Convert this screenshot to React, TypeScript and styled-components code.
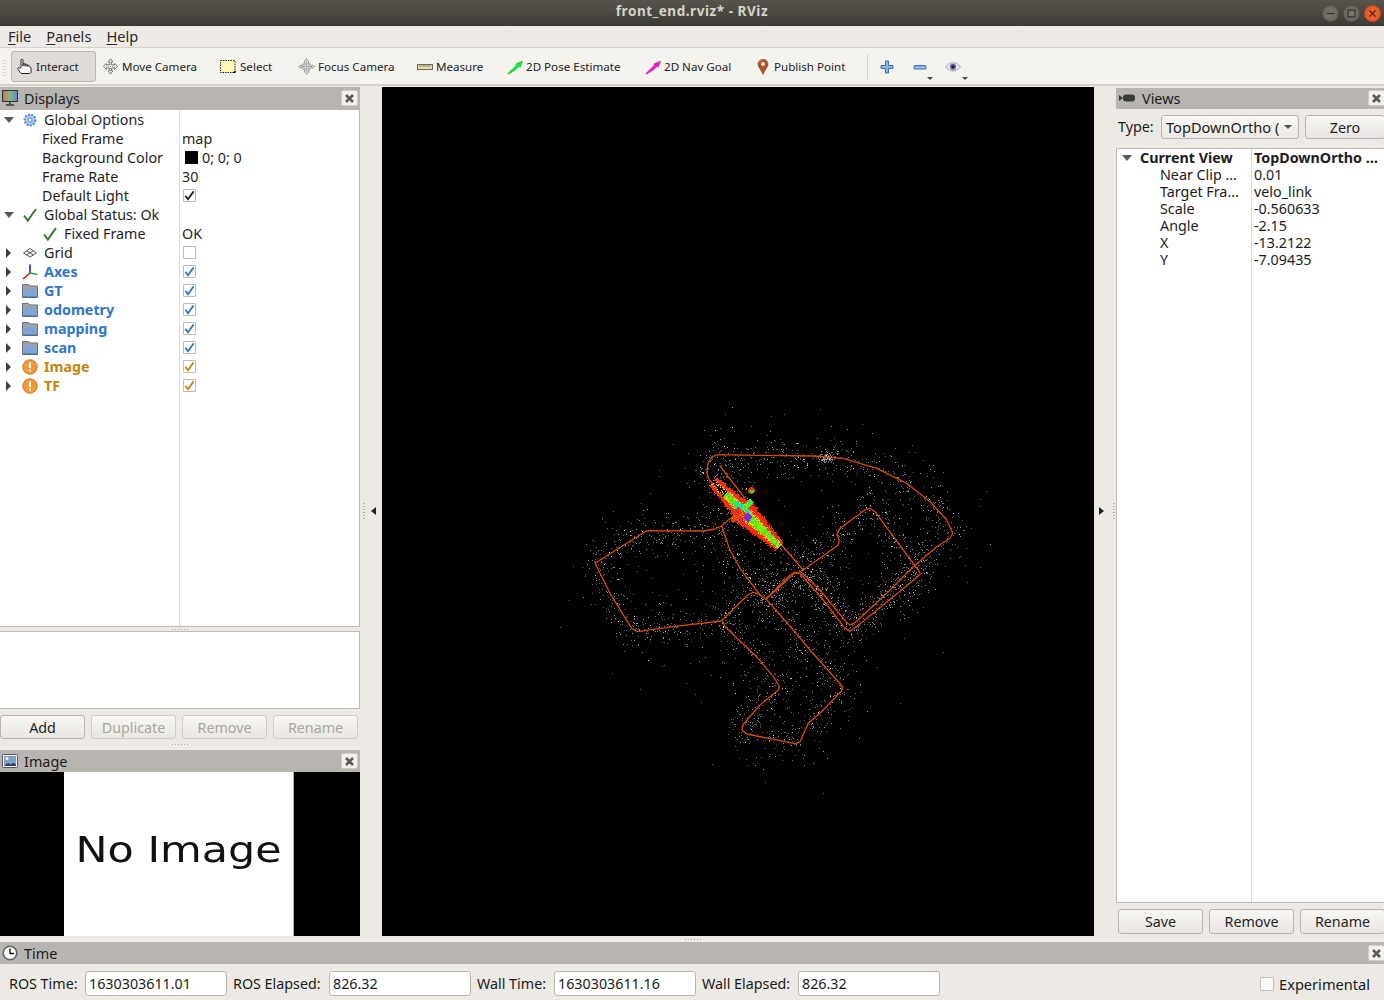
import React from "react";
import styled, { createGlobalStyle } from "styled-components";

const Global = createGlobalStyle`
  html, body { margin: 0; padding: 0; background: #edeae5; }
  body { font-family: "Noto Sans", "Open Sans", sans-serif; color: #1a1a1a; }
  * { box-sizing: border-box; }
`;

const Window = styled.div`
  width: 1384px; height: 1000px; overflow: hidden; display: flex; flex-direction: column; background: #edeae5;
`;
const TitleBar = styled.div`
  height: 26px; flex: none; display: grid; grid-template-columns: 1fr auto 1fr; align-items: center;
  background: linear-gradient(#57544c, #3d3b36); padding-bottom: 5px;
`;
const TitleText = styled.div`
  grid-column: 2; font-size: 13.5px; font-weight: 700; color: #d6d3c9; letter-spacing: 0.55px; white-space: nowrap;
`;
const WinButtons = styled.div`
  grid-column: 3; justify-self: end; display: flex; gap: 4px; padding-right: 3px; padding-top: 5px;
`;
const WinButton = styled.div<{ $close?: boolean }>`
  width: 17px; height: 17px; border-radius: 50%; display: flex; align-items: center; justify-content: center;
  background: ${(p) => (p.$close ? "radial-gradient(#f0693a, #e0501c)" : "radial-gradient(#77756e, #65635c)")};
  border: 1px solid ${(p) => (p.$close ? "#c84a1c" : "#55534c")};
`;
const MenuBar = styled.div`
  height: 22px; flex: none; display: flex; align-items: center; gap: 15px; padding: 0 0 1px 8px; font-size: 14.6px;
  background: #eeebe6; border-bottom: 1px solid #d6d2cc; color: #2a2a2a;
`;
const MenuItem = styled.span`
  u { text-underline-offset: 2px; }
`;
const ToolBar = styled.div`
  height: 38px; flex: none; display: flex; align-items: center; padding: 1px 0 0 11px; position: relative;
  background: #f5f3ee; border-bottom: 2px solid #d4d0ca; font-size: 11.6px; color: #222;
`;
const Grip = styled.div`
  position: absolute; left: 3px; top: 12px; width: 4px; height: 16px;
  background: repeating-linear-gradient(90deg, #c4c0ba 0 1px, transparent 1px 2px);
  -webkit-mask-image: repeating-linear-gradient(#000 0 1px, transparent 1px 3px);
`;
const ToolButton = styled.div<{ $w: number; $active?: boolean }>`
  width: ${(p) => p.$w}px; height: 31px; flex: none; display: flex; align-items: center; gap: 3px;
  padding-left: ${(p) => (p.$active ? 4 : 5)}px; white-space: nowrap; border-radius: 3px;
  background: ${(p) => (p.$active ? "#dfdcd8" : "transparent")};
  border: 1px solid ${(p) => (p.$active ? "#b9b5af" : "transparent")};
`;
const ToolSep = styled.div`
  width: 1px; height: 26px; background: #d6d2cc; margin: 0 12px 0 4px; flex: none;
`;
const IconButton = styled.div<{ $w: number }>`
  width: ${(p) => p.$w}px; height: 31px; flex: none; position: relative; display: flex; align-items: center;
`;
const MiniArrow = styled.span<{ $right?: number }>`
  position: absolute; right: ${(p) => p.$right ?? 1}px; bottom: 2px; width: 0; height: 0;
  border-left: 3px solid transparent; border-right: 3px solid transparent; border-top: 3px solid #444;
`;
const Body = styled.div`
  height: 850px; flex: none; display: flex; 
`;
const LeftColumn = styled.div`
  width: 360px; flex: none; display: flex; flex-direction: column; padding-top: 1px;
`;
const PanelHeader = styled.div<{ $h?: number; $shift?: number }>`
  height: ${(p) => p.$h ?? 22}px; flex: none; display: flex; align-items: center; background: #b8b4b0; font-size: 14.4px;
  padding: 0 0 ${(p) => p.$shift ?? 0}px 2px; gap: 6px; color: #1c1c1c; position: relative;
`;
const HeaderTitle = styled.span`
  flex: 1; white-space: nowrap;
`;
const CloseBox = styled.div<{ $edge?: boolean }>`
  width: 17px; height: 16px; flex: none; margin-right: ${(p) => (p.$edge ? -1 : 2)}px; border-radius: 2px; background: #f3f1ed; border: 1px solid #cfccc7;
  display: flex; align-items: center; justify-content: center;
`;
const DisplayTree = styled.div`
  height: 517px; flex: none; background: #fff; border-right: 1px solid #bdb9b4; border-bottom: 1px solid #bdb9b4;
  font-size: 14.3px; overflow: hidden; position: relative;
  background-image: linear-gradient(#dedbd7, #dedbd7); background-size: 1px 100%; background-position: 179px 0; background-repeat: no-repeat;
`;
const Row = styled.div`
  height: 19px; display: flex; align-items: center; white-space: nowrap;
`;
const NameCell = styled.div<{ $color?: string; $bold?: boolean }>`
  width: 182px; flex: none; display: flex; align-items: center; height: 100%;
  color: ${(p) => p.$color ?? "#1f1f1f"}; font-weight: ${(p) => (p.$bold ? 700 : 400)};
`;
const Expander = styled.div`
  width: 22px; flex: none; height: 100%; display: flex; align-items: center; padding-left: 4px;
`;
const ArrowDown = styled.span`
  width: 0; height: 0; border-left: 5px solid transparent; border-right: 5px solid transparent; border-top: 6px solid #5a5a5a;
`;
const ArrowRight = styled.span`
  width: 0; height: 0; margin-left: 2px; border-top: 5px solid transparent; border-bottom: 5px solid transparent; border-left: 5px solid #3e3e3e;
`;
const IconSlot = styled.div`
  width: 16px; height: 16px; flex: none; margin-right: 6px; display: flex; align-items: center; justify-content: center;
`;
const PropLabel = styled.span`
  padding-left: 42px;
`;
const ChildStatus = styled.div`
  display: flex; align-items: center; gap: 6px; padding-left: 42px;
`;
const ValueCell = styled.div`
  display: flex; align-items: center; gap: 4px; color: #1f1f1f;
`;
const Swatch = styled.span`
  width: 13px; height: 13px; background: #000; margin-left: 3px;
`;
const CheckBox = styled.div`
  width: 13px; height: 13px; margin-left: 1px; background: #fff; border: 1px solid #bdb9b4; border-radius: 1px; display: flex; align-items: center; justify-content: center;
`;
const Splitter = styled.div<{ $h: number }>`
  height: ${(p) => p.$h}px; flex: none; display: flex; align-items: center; justify-content: center;
`;
const HDots = styled.div`
  width: 16px; height: 1px; background: repeating-linear-gradient(90deg, #aaa6a0 0 1px, transparent 1px 3px);
`;
const DescBox = styled.div`
  height: 78px; flex: none; background: #fff; border: 1px solid #bdb9b4; border-left: none;
`;
const ButtonRow = styled.div<{ $pad?: string }>`
  display: flex; gap: 6px; flex: none; padding: ${(p) => p.$pad ?? "6px 2px 0 0"}; 
`;
const Btn = styled.div<{ $disabled?: boolean; $h?: number; $w?: number }>`
  width: ${(p) => p.$w ?? 85}px; height: ${(p) => p.$h ?? 25}px; flex: none; border: 1px solid #b9b5af; border-radius: 3px;
  background: linear-gradient(#f9f8f6, #e9e6e2); display: flex; align-items: center; justify-content: center; font-size: 14.3px;
  color: ${(p) => (p.$disabled ? "#a8a5a0" : "#1f1f1f")};
  border-color: ${(p) => (p.$disabled ? "#d0ccc7" : "#b9b5af")};
`;
const ZeroBtn = styled(Btn)`
  margin-left: 6px;
`;
const ImagePane = styled.div`
  height: 164px; flex: none; background: #000; display: flex; justify-content: center; padding-right: 1px;
`;
const NoImage = styled.div`
  width: 230px; margin-left: -1px; background: #fff; border-right: 1px solid #aaa; color: #111; display: flex; align-items: center; justify-content: center;
  font-family: "DejaVu Sans", sans-serif; font-size: 36px; white-space: nowrap; padding-bottom: 10px;
`;
const NoImageText = styled.span`
  display: inline-block; transform: scaleX(1.19); font-weight: 400;
`;
const SideSplit = styled.div<{ $gap: number; $pad: number }>`
  width: 22px; flex: none; display: flex; align-items: center; gap: ${(p) => p.$gap}px; padding-left: ${(p) => p.$pad}px;
`;
const VDots = styled.div`
  width: 2px; height: 16px; flex: none; background: repeating-linear-gradient(#b5b1ab 0 1px, transparent 1px 3px);
`;
const SideLeft = styled.span`
  width: 0; height: 0; flex: none; margin-left: -2px; border-top: 4px solid transparent; border-bottom: 4px solid transparent; border-right: 5px solid #222;
`;
const SideRight = styled.span`
  width: 0; height: 0; flex: none; border-top: 4px solid transparent; border-bottom: 4px solid transparent; border-left: 5px solid #222;
`;
const Viewport = styled.div`
  width: 712px; flex: none; margin-top: 1px; background: #000; overflow: hidden;
`;
const MapSvg = styled.svg`
  display: block; width: 712px; height: 849px;
`;
const RightColumn = styled.div`
  width: 268px; flex: none; display: flex; flex-direction: column; padding-top: 2px; overflow: hidden;
`;
const TypeRow = styled.div`
  height: 39px; flex: none; display: flex; align-items: flex-start; font-size: 14.3px; padding: 6px 0 0 2px;
`;
const TypeLabel = styled.span`
  width: 43px; height: 24px; line-height: 24px; flex: none;
`;
const Combo = styled.div`
  width: 138px; height: 24px; flex: none; border: 1px solid #b9b5af; border-radius: 3px; background: linear-gradient(#f9f8f6, #ebe8e4);
  display: flex; align-items: center; padding-left: 4px; overflow: hidden; white-space: nowrap; gap: 2px; font-size: 14.6px;
`;
const ComboText = styled.span`
  width: 113px; overflow: hidden; flex: none;
`;
const ComboArrow = styled.span`
  width: 0; height: 0; flex: none; margin-left: 3px; border-left: 4px solid transparent; border-right: 4px solid transparent; border-top: 4px solid #555;
`;
const ViewTree = styled.div`
  height: 755px; flex: none; background: #fff; border: 1px solid #bdb9b4; border-right: none; font-size: 14.3px;
  background-image: linear-gradient(#dedbd7, #dedbd7); background-size: 1px 100%; background-position: 134px 0; background-repeat: no-repeat;
`;
const ViewRow = styled.div<{ $bold?: boolean }>`
  height: 17px; display: flex; align-items: center; white-space: nowrap; font-weight: ${(p) => (p.$bold ? 700 : 400)}; color: #1c1c1c;
`;
const ViewName = styled.div<{ $top?: boolean }>`
  width: 137px; flex: none; display: flex; align-items: center; padding-left: ${(p) => (p.$top ? 5 : 43)}px; gap: 8px;
`;
const TimeSplit = styled.div`
  height: 6px; flex: none; display: flex; justify-content: center; align-items: center; padding-left: 2px;
`;
const TimeRow = styled.div`
  flex: 1; display: flex; align-items: center; padding: 3px 14px 0 9px; font-size: 14.3px; white-space: nowrap;
`;
const TimeLabel = styled.span<{ $w: number }>`
  width: ${(p) => p.$w}px; flex: none;
`;
const TimeField = styled.div`
  width: 142px; height: 25px; flex: none; margin-right: 6px; border: 1px solid #b9b5af; border-radius: 3px; background: #fff; display: flex; align-items: center; padding-left: 3px;
`;
const Experimental = styled.div`
  margin-left: auto; display: flex; align-items: center; gap: 5px; font-size: 14.6px;
`;
const ExpBox = styled.div`
  width: 14px; height: 14px; background: #fbfaf9; border: 1px solid #c2beb9; border-radius: 1px;
`;

/* ---------- icons ---------- */
const Ico: React.FC<React.PropsWithChildren<{ s?: number; vb?: string }>> = ({ s = 16, vb = "0 0 16 16", children }) => (
  <svg width={s} height={s} viewBox={vb} style={{ flex: "none" }}>{children}</svg>
);
const CloseX = () => (
  <Ico s={9} vb="0 0 9 9"><path d="M1 1L8 8M8 1L1 8" stroke="#5c5a56" strokeWidth="2.6" /></Ico>
);
const HandIcon = () => (
  <Ico s={17} vb="0 0 17 17">
    <path d="M5 9.5V2.3a1 1 0 0 1 2 0V8V6.5a1 1 0 0 1 2 0V8.2V7a1 1 0 0 1 2 0v1.5V8a1 1 0 0 1 2 0v.6c1 .2 2 .5 2 1.9v3.3c0 .9-.6 1.7-1.6 1.7H6c-.9 0-1.4-.5-1.9-1.2L2 11.3c-.7-1.2.7-2.3 1.7-1.2z" fill="#fff" stroke="#222" strokeWidth="1" />
  </Ico>
);
const MoveIcon = () => (
  <Ico s={17} vb="0 0 17 17">
    <g fill="#f1efec" stroke="#666" strokeWidth="0.9">
      <path d="M8.5 .8l2.4 3H9.6v3h3v-1.3l3 2.9-3 3v-1.4h-3v2.9h1.3l-2.4 3.2-2.4-3.2h1.3V9.999h-3v1.4l-3-3 3-2.9v1.3h3v-3H6.1z" />
    </g>
    <path d="M8.5 4v9M4 8.5h9" stroke="#999" strokeWidth="0.8" strokeDasharray="1 1" />
  </Ico>
);
const SelectIcon = () => (
  <Ico s={17} vb="0 0 17 17">
    <rect x=".5" y="2.5" width="14.500" height="12" fill="#fdf7b8" stroke="#222" strokeWidth="1" strokeDasharray="1.5 1" />
    <path d="M12.500 15h3v-3z" fill="#111" />
  </Ico>
);
const FocusIcon = () => (
  <Ico s={17} vb="0 0 17 17">
    <path d="M8.5.5l2.5 3.5-1 .2v.6a4 4 0 0 1 3 3l.8.0L14 7l2.7 1.5L14 10v-.9l-.8.1a4 4 0 0 1-3 3v.8l1 .2-2.5 3.3L6 13l1-.2v-.6a4 4 0 0 1-3-3l-.9-.1V10L.4 8.5 3.1 7v.9h.9a4 4 0 0 1 3-3v-.7L6 4z" fill="#e7e5e1" stroke="#8a8a88" strokeWidth=".8" />
    <path d="M8.5 3v11M3 8.500h11M6 6h5v5H6z" stroke="#9a9a98" strokeWidth=".7" fill="none" />
  </Ico>
);
const RulerIcon = () => (
  <Ico s={16} vb="0 0 16 16">
    <rect x=".5" y="5.500" width="15" height="5" fill="#e4dba6" stroke="#6a6a60" />
    <path d="M3 6v2M5 6v1.500M7 6v2M9 6v1.500M11 6v2M13 6v1.500" stroke="#6a6a60" strokeWidth=".8" />
  </Ico>
);
const PoseArrow: React.FC<{ fill: string; edge: string }> = ({ fill, edge }) => (
  <Ico s={16} vb="0 0 16 16">
    <path d="M.8 14.500L6.500 9 9.500 6l-.8-1L15.500 2 13.300 8.400 12.200 7.300 9 10.500l-7 4.500z" fill={fill} stroke={edge} strokeWidth=".4" />
  </Ico>
);
const PinIcon = () => (
  <Ico s={16} vb="0 0 16 16">
    <path d="M8 15.500C6.500 11 3 8.500 3 5.200a5 5 0 0 1 10 0C13 8.500 9.500 11 8 15.500z" fill="#b0522a" stroke="#8a4322" strokeWidth=".6" />
    <circle cx="8" cy="5" r="2" fill="#f3e4d8" />
    <path d="M4.500 3a4 4 0 0 1 3-2" stroke="#e88c5c" fill="none" />
  </Ico>
);
const PlusIcon = () => (
  <Ico s={14} vb="0 0 14 14">
    <path d="M5.500 1h3v4.500H13v3H8.500V13h-3V8.500H1v-3h4.500z" fill="#8fb6e6" stroke="#3e6fb0" />
  </Ico>
);
const MinusIcon = () => (
  <Ico s={14} vb="0 0 14 14">
    <rect x="1" y="5.500" width="12" height="3.500" rx=".5" fill="#8fb6e6" stroke="#3e6fb0" />
  </Ico>
);
const EyeIcon = () => (
  <Ico s={16} vb="0 0 16 16">
    <path d="M.500 8C3 4.500 5.500 3.800 8 3.800s5 .7 7.500 4.200C13 11 10.500 12 8 12S3 11 .500 8z" fill="#e9e8e6" stroke="#a5a5a3" />
    <circle cx="8" cy="7.800" r="3.100" fill="#5a68a8" />
    <circle cx="8" cy="7.800" r="1.400" fill="#15152c" />
  </Ico>
);
const MonitorIcon = () => (
  <Ico s={16} vb="0 0 16 16">
    <defs>
      <linearGradient id="mon" x1="0" x2="1" y1="0" y2="0">
        <stop offset="0" stopColor="#d26a6a" /><stop offset=".5" stopColor="#79c07a" /><stop offset="1" stopColor="#6a7fd6" />
      </linearGradient>
    </defs>
    <rect x=".5" y=".5" width="15" height="11" fill="url(#mon)" stroke="#333" />
    <path d="M8 12v2M4 15h8" stroke="#333" strokeWidth="1.400" />
  </Ico>
);
const PictureIcon = () => (
  <Ico s={16} vb="0 0 16 16">
    <rect x=".5" y="1.500" width="15" height="13" rx="1" fill="#f0f0f0" stroke="#55585e" />
    <rect x="2" y="3" width="12" height="10" fill="#7fa0c8" />
    <circle cx="5" cy="5.500" r="1.600" fill="#f5f2c4" />
    <path d="M2 13l4-3 3 1.500 2-2 3 2V13z" fill="#33425c" />
  </Ico>
);
const CameraIcon = () => (
  <Ico s={18} vb="0 0 18 12">
    <path d="M1 3l4 3-4 3z" fill="#3a3a3a" /><rect x="5" y="2.500" width="12" height="7" rx="3" fill="#3a3a3a" />
  </Ico>
);
const ClockIcon = () => (
  <Ico s={16} vb="0 0 16 16">
    <circle cx="8" cy="8" r="6.800" fill="#fff" stroke="#626262" strokeWidth="1.600" />
    <path d="M8 3.500V8.500H12" stroke="#111" strokeWidth="1.400" fill="none" />
  </Ico>
);
const GearIcon = () => (
  <Ico s={14} vb="0 0 14 14">
    <circle cx="7" cy="7" r="5.300" fill="#a6c4ea" stroke="#5a8fd4" strokeWidth="2.400" strokeDasharray="1.900 1.300" />
    <circle cx="7" cy="7" r="3.600" fill="#7ea8de" stroke="#cfe0f5" strokeWidth="1" />
    <circle cx="7" cy="7" r="1.300" fill="#eaf2fb" />
  </Ico>
);
const Tick: React.FC<{ color?: string; s?: number; w?: number }> = ({ color = "#2f7d32", s = 16, w = 2 }) => (
  <Ico s={s} vb="0 0 16 16"><path d="M2 8.500l3.800 5L14 2" fill="none" stroke={color} strokeWidth={w} /></Ico>
);
const GridIcon = () => (
  <Ico s={16} vb="0 0 16 16">
    <path d="M8 3.500L14.500 8 8 12 1.500 8zM4.700 5.700L11.200 10M11.300 5.700L4.800 10" fill="none" stroke="#555" strokeWidth="1" />
  </Ico>
);
const AxesIcon = () => (
  <Ico s={16} vb="0 0 16 16">
    <path d="M8 9V.5" stroke="#1a2ad0" strokeWidth="1.600" /><path d="M8 9l7.500 1.500" stroke="#20b030" strokeWidth="1.600" /><path d="M8 9l-7 6" stroke="#d81818" strokeWidth="1.600" />
  </Ico>
);
const FolderIcon = () => (
  <Ico s={16} vb="0 0 16 16">
    <path d="M.500 1.500h6l1.500 1.500h7.500v11.500H.500z" fill="#a0a3a9" stroke="#6a6e76" />
    <rect x="1.500" y="6" width="13" height="7.500" fill="#7fa5d6" />
    <path d="M1 14h14" stroke="#3f6aa0" />
  </Ico>
);
const WarnIcon = () => (
  <Ico s={16} vb="0 0 16 16">
    <circle cx="8" cy="8" r="7.200" fill="#ef9a3c" stroke="#d6761c" />
    <rect x="7" y="3.500" width="2" height="5.500" fill="#fff" /><rect x="7" y="10.500" width="2" height="2" fill="#fff" />
  </Ico>
);

/* ---------- map ---------- */
const Z5 = ([x, y]: number[]): [number, number] => [x / 3 + 560, y / 3 + 430];
const tracks: number[][][] = [
  [[480,108],[555,205]],
  [[440,130],[444,100],[456,80],[475,74],[600,76],[760,78],[850,85],[950,115],[1040,160],[1110,215],[1160,270],[1178,310],[1170,325],[1130,350],[1060,410],[980,490],[885,578],[870,585],[858,575],[780,480],[722,425],[703,430],[660,470],[618,507],[600,495],[580,486],[560,498],[492,565],[482,573],[340,590],[232,605],[215,595],[150,490],[105,400],[260,302],[430,303],[465,297],[485,288],[505,270],[525,255]],
  [[440,130],[448,150],[470,175]],
  [[485,290],[510,360],[540,415],[600,495]],
  [[660,340],[730,420],[835,345],[838,330],[830,312],[840,295],[915,240],[930,235],[945,245],[1000,320],[1075,420],[1081,432],[1065,447],[880,598],[868,604],[855,595],[790,510],[722,432],[706,426],[690,435],[620,505]],
  [[618,507],[700,600],[750,660],[848,770],[845,782],[780,850],[745,880],[720,935],[705,941],[560,912],[546,900],[548,885],[600,825],[655,780],[658,768],[640,740],[590,680],[495,590],[488,572]],
];
const rng = (seed: number) => () => {
  seed |= 0; seed = (seed + 0x6d2b79f5) | 0;
  let t = Math.imul(seed ^ (seed >>> 15), 1 | seed);
  t = (t + Math.imul(t ^ (t >>> 7), 61 | t)) ^ t;
  return ((t ^ (t >>> 14)) >>> 0) / 4294967296;
};
const cloud = (() => {
  const r = rng(42);
  const gauss = () => (r() + r() + r() + r() - 2) / 0.58;
  const segs: number[][] = [];
  let total = 0;
  tracks.forEach((t) => t.slice(1).forEach((p, i) => {
    const [ax, ay] = Z5(t[i]); const [bx, by] = Z5(p);
    const len = Math.hypot(bx - ax, by - ay); total += len; segs.push([ax, ay, bx, by, len]);
  }));
  const buckets = ["", "", ""];
  const add = (x: number, y: number) => {
    const b = r(); const k = b < 0.72 ? 0 : b < 0.97 ? 1 : 2;
    buckets[k] += `M${Math.round(x)} ${Math.round(y)}h1v1h-1z`;
  };
  segs.forEach(([ax, ay, bx, by, len]) => {
    const n = Math.round((len / total) * 3300);
    for (let i = 0; i < n; i++) {
      const t = r(); const s = r() < 0.75 ? 9 : 20;
      add(ax + (bx - ax) * t + gauss() * s, ay + (by - ay) * t + gauss() * s);
    }
  });
  for (let i = 0; i < 110; i++) add(827 + gauss() * 4, 457 + gauss() * 2.5);
  for (let i = 0; i < 120; i++) add(740 + gauss() * 65, 590 + gauss() * 65);
  return buckets;
})();
const scanCells = (() => {
  const r = rng(7);
  const out: Record<string, string> = {};
  const put = (c: string, x: number, y: number) => { out[c] = (out[c] || "") + `M${x} ${y}h1v1h-1z`; };
  const cx = 742, cy = 510;
  for (let x = 708; x < 790; x++) for (let y = 472; y < 556; y++) {
    const dx = x - cx, dy = y - cy;
    const u = dx * 0.717 + dy * 0.697, v = -dx * 0.697 + dy * 0.717;
    if (Math.hypot(x - 751, y - 490) < 3.6) { put(Math.hypot(x - 751.5, y - 491) < 2 ? "#30e020" : "#f52a10", x, y); continue; }
    if (v < 0 && v > -14 && Math.abs(u) < 2.8) { put(r() < 0.7 ? "#3ee83a" : "#9dee10", x, y); continue; }
    if (v > 0 && v < 15 && Math.abs(u) < 6.5 - v * 0.3) { put(r() < 0.8 ? "#f42a10" : "#f8a010", x, y); continue; }
    if (u < -41 || u > 52) continue;
    const hw = u < 0 ? 5.5 + 5 * (1 + u / 41) : 9.5 * (1 - u / 72) + 3;
    const q = Math.abs(v) / hw + (r() - 0.5) * 0.3;
    if (q > 1) continue;
    if (u < -24 && q < 0.4) { if (r() < 0.25) put("#ffe000", x, y); continue; }
    if (Math.abs(u) < 5 && Math.abs(v) < 5) { put(r() < 0.8 ? "#24d8c8" : "#7090ff", x, y); continue; }
    if (u >= 5 && u < 12 && Math.abs(v - 1) < 3.5) { put(r() < 0.7 ? "#9a18f0" : "#4040ff", x, y); continue; }
    if (q > 0.5) put("#f52a10", x, y);
    else if (q > 0.34) put(r() < 0.6 ? "#ffd800" : "#f87010", x, y);
    else put(u < 12 && u > -12 ? "#20e870" : r() < 0.55 ? "#8cf000" : "#28e83c", x, y);
  }
  return out;
})();

const MapDrawing = () => (
  <MapSvg viewBox="382 87 712 849">
    <g shapeRendering="crispEdges">
      <path d={cloud[0]} fill="#666666" />
      <path d={cloud[1]} fill="#9a9a9a" />
      <path d={cloud[2]} fill="#e0e0e0" />
    </g>
    <g fill="none" stroke="#d64a0e" strokeWidth="1.300" strokeLinejoin="round" strokeLinecap="round">
      {tracks.map((t, i) => (
        <polyline key={i} points={t.map((p) => Z5(p).map((n) => n.toFixed(1)).join(",")).join(" ")} />
      ))}
    </g>
    <g shapeRendering="crispEdges">
      {Object.entries(scanCells).map(([c, d]) => <path key={c} d={d} fill={c} />)}
    </g>
  </MapSvg>
);

/* ---------- data ---------- */
const BLUE = "#2f76c8";
const AMBER = "#c5860f";
const plugins = [
  { name: "Axes", icon: <AxesIcon />, color: BLUE, check: BLUE },
  { name: "GT", icon: <FolderIcon />, color: BLUE, check: BLUE },
  { name: "odometry", icon: <FolderIcon />, color: BLUE, check: BLUE },
  { name: "mapping", icon: <FolderIcon />, color: BLUE, check: BLUE },
  { name: "scan", icon: <FolderIcon />, color: BLUE, check: BLUE },
  { name: "Image", icon: <WarnIcon />, color: AMBER, check: AMBER },
  { name: "TF", icon: <WarnIcon />, color: AMBER, check: AMBER },
];
const Check: React.FC<{ color?: string }> = ({ color }) => (
  <CheckBox>{color && <Tick color={color} s={11} w={2.600} />}</CheckBox>
);
const viewRows = [
  ["Near Clip …", "0.01"], ["Target Fra…", "velo_link"], ["Scale", "-0.560633"],
  ["Angle", "-2.15"], ["X", "-13.2122"], ["Y", "-7.09435"],
];

export default function App() {
  return (
    <Window>
      <Global />
      <TitleBar>
        <TitleText>front_end.rviz* - RViz</TitleText>
        <WinButtons>
          <WinButton><Ico s={9} vb="0 0 9 9"><path d="M.5 4.500h8" stroke="#35342f" strokeWidth="1.200" /></Ico></WinButton>
          <WinButton><Ico s={9} vb="0 0 9 9"><rect x="1" y="1" width="7" height="7" fill="none" stroke="#35342f" strokeWidth="1.200" /></Ico></WinButton>
          <WinButton $close><Ico s={9} vb="0 0 9 9"><path d="M1.500 1.500l6 6M7.500 1.500l-6 6" stroke="#5a2410" strokeWidth="1.400" /></Ico></WinButton>
        </WinButtons>
      </TitleBar>
      <MenuBar>
        <MenuItem><u>F</u>ile</MenuItem>
        <MenuItem><u>P</u>anels</MenuItem>
        <MenuItem><u>H</u>elp</MenuItem>
      </MenuBar>
      <ToolBar>
        <Grip />
        <ToolButton $w={85} $active><HandIcon />Interact</ToolButton>
        <ToolButton $w={118}><MoveIcon />Move Camera</ToolButton>
        <ToolButton $w={78}><SelectIcon />Select</ToolButton>
        <ToolButton $w={119}><FocusIcon />Focus Camera</ToolButton>
        <ToolButton $w={90}><RulerIcon />Measure</ToolButton>
        <ToolButton $w={138}><PoseArrow fill="#18e83c" edge="#0c8a22" />2D Pose Estimate</ToolButton>
        <ToolButton $w={110}><PoseArrow fill="#f018d0" edge="#900c80" />2D Nav Goal</ToolButton>
        <ToolButton $w={114}><PinIcon />Publish Point</ToolButton>
        <ToolSep />
        <IconButton $w={33}><PlusIcon /></IconButton>
        <IconButton $w={32}><MinusIcon /><MiniArrow $right={12} /></IconButton>
        <IconButton $w={24}><EyeIcon /><MiniArrow /></IconButton>
      </ToolBar>
      <Body>
        <LeftColumn>
          <PanelHeader $h={23} $shift={1}>
            <MonitorIcon />
            <HeaderTitle>Displays</HeaderTitle>
            <CloseBox><CloseX /></CloseBox>
          </PanelHeader>
          <DisplayTree>
            <Row><NameCell><Expander><ArrowDown /></Expander><IconSlot><GearIcon /></IconSlot>Global Options</NameCell></Row>
            <Row><NameCell><PropLabel>Fixed Frame</PropLabel></NameCell><ValueCell>map</ValueCell></Row>
            <Row><NameCell><PropLabel>Background Color</PropLabel></NameCell><ValueCell><Swatch />0; 0; 0</ValueCell></Row>
            <Row><NameCell><PropLabel>Frame Rate</PropLabel></NameCell><ValueCell>30</ValueCell></Row>
            <Row><NameCell><PropLabel>Default Light</PropLabel></NameCell><ValueCell><Check color="#222" /></ValueCell></Row>
            <Row><NameCell><Expander><ArrowDown /></Expander><IconSlot><Tick /></IconSlot>Global Status: Ok</NameCell></Row>
            <Row>
              <NameCell><ChildStatus><Tick />Fixed Frame</ChildStatus></NameCell>
              <ValueCell>OK</ValueCell>
            </Row>
            <Row><NameCell><Expander><ArrowRight /></Expander><IconSlot><GridIcon /></IconSlot>Grid</NameCell><ValueCell><Check /></ValueCell></Row>
            {plugins.map((p) => (
              <Row key={p.name}>
                <NameCell $color={p.color} $bold><Expander><ArrowRight /></Expander><IconSlot>{p.icon}</IconSlot>{p.name}</NameCell>
                <ValueCell><Check color={p.check} /></ValueCell>
              </Row>
            ))}
          </DisplayTree>
          <Splitter $h={4}><HDots /></Splitter>
          <DescBox />
          <ButtonRow>
            <Btn $h={24}>Add</Btn>
            <Btn $h={24} $disabled>Duplicate</Btn>
            <Btn $h={24} $disabled>Remove</Btn>
            <Btn $h={24} $disabled>Rename</Btn>
          </ButtonRow>
          <Splitter $h={11}><HDots /></Splitter>
          <PanelHeader>
            <PictureIcon />
            <HeaderTitle>Image</HeaderTitle>
            <CloseBox><CloseX /></CloseBox>
          </PanelHeader>
          <ImagePane><NoImage><NoImageText>No Image</NoImageText></NoImage></ImagePane>
        </LeftColumn>
        <SideSplit $gap={8} $pad={3}><VDots /><SideLeft /></SideSplit>
        <Viewport><MapDrawing /></Viewport>
        <SideSplit $gap={9} $pad={5}><SideRight /><VDots /></SideSplit>
        <RightColumn>
          <PanelHeader $h={21} $shift={1}>
            <CameraIcon />
            <HeaderTitle>Views</HeaderTitle>
            <CloseBox $edge><CloseX /></CloseBox>
          </PanelHeader>
          <TypeRow>
            <TypeLabel>Type:</TypeLabel>
            <Combo><ComboText>TopDownOrtho (rviz)</ComboText><ComboArrow /></Combo>
            <ZeroBtn $h={24} $w={80}>Zero</ZeroBtn>
          </TypeRow>
          <ViewTree>
            <ViewRow $bold>
              <ViewName $top><ArrowDown />Current View</ViewName>TopDownOrtho …
            </ViewRow>
            {viewRows.map(([k, v]) => (
              <ViewRow key={k}><ViewName>{k}</ViewName>{v}</ViewRow>
            ))}
          </ViewTree>
          <ButtonRow $pad="6px 0 0 2px">
            <Btn>Save</Btn>
            <Btn>Remove</Btn>
            <Btn>Rename</Btn>
          </ButtonRow>
        </RightColumn>
      </Body>
      <TimeSplit><HDots /></TimeSplit>
      <PanelHeader>
        <ClockIcon />
        <HeaderTitle>Time</HeaderTitle>
        <CloseBox $edge><CloseX /></CloseBox>
      </PanelHeader>
      <TimeRow>
        <TimeLabel $w={76}>ROS Time:</TimeLabel><TimeField>1630303611.01</TimeField>
        <TimeLabel $w={96}>ROS Elapsed:</TimeLabel><TimeField>826.32</TimeField>
        <TimeLabel $w={77}>Wall Time:</TimeLabel><TimeField>1630303611.16</TimeField>
        <TimeLabel $w={96}>Wall Elapsed:</TimeLabel><TimeField>826.32</TimeField>
        <Experimental><ExpBox />Experimental</Experimental>
      </TimeRow>
    </Window>
  );
}
